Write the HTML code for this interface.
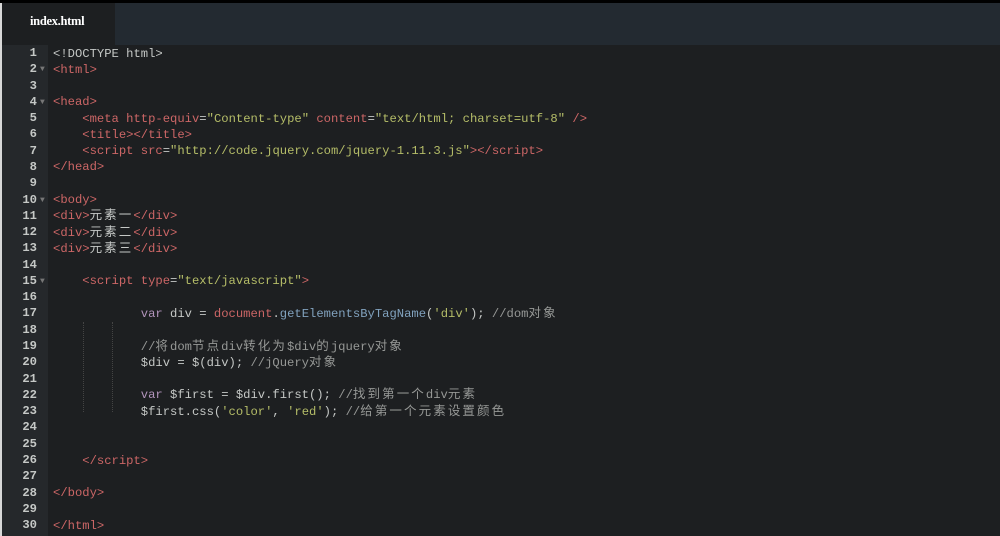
<!DOCTYPE html>
<html><head><meta charset="utf-8"><style>
body{margin:0;width:1000px;height:536px;overflow:hidden;background:#1d1f21;position:relative;font-family:"Liberation Mono","Noto Sans CJK SC",monospace}
.top{position:absolute;left:0;top:0;width:1000px;height:3px;background:#000}
.bar{position:absolute;left:0;top:3px;width:1000px;height:42px;background:#232a31}
.tab{position:absolute;left:2px;top:3px;width:113px;height:42px;background:#1d1f21;color:#fff;font:bold 12.5px "Liberation Serif",serif;letter-spacing:-0.3px;line-height:36px;padding-left:28px;box-sizing:border-box}
.edge{position:absolute;left:0;top:3px;width:2px;height:533px;background:#d8d8d8}
.gut{position:absolute;left:2px;top:45px;width:46px;height:491px;background:#25282b}
.ln{position:absolute;left:2px;width:35px;text-align:right;color:#c5c8c6;font-size:12.2px;font-weight:bold;line-height:16px;height:16px}
.fd{position:absolute;left:40px;color:#777;font-size:8px;line-height:10px}
.cl{position:absolute;left:53px;white-space:pre;font-size:12.2px;color:#c5c8c6;line-height:16px;height:16px}
.cj{font-size:12.5px;letter-spacing:2.1px;line-height:16px}
.t{color:#cc6666}.s{color:#b5bd68}.k{color:#b294bb}.c{color:#969896}
.g{position:absolute;width:0;border-left:1px dotted #444}
</style></head><body>
<div class="top"></div><div class="bar"></div><div class="tab">index.html</div><div class="edge"></div><div class="gut"></div>
<div class="g" style="left:83px;top:322px;height:90px"></div>
<div class="g" style="left:112px;top:322px;height:90px"></div>
<div id="c"></div>
<script>
var L=[
'<span>&lt;!DOCTYPE html&gt;</span>',
'<span class="t">&lt;html&gt;</span>','',
'<span class="t">&lt;head&gt;</span>',
'    <span class="t">&lt;meta http-equiv</span>=<span class="s">"Content-type"</span> <span class="t">content</span>=<span class="s">"text/html; charset=utf-8"</span> <span class="t">/&gt;</span>',
'    <span class="t">&lt;title&gt;&lt;/title&gt;</span>',
'    <span class="t">&lt;script src</span>=<span class="s">"http://code.jquery.com/jquery-1.11.3.js"</span><span class="t">&gt;&lt;/script&gt;</span>',
'<span class="t">&lt;/head&gt;</span>','',
'<span class="t">&lt;body&gt;</span>',
'<span class="t">&lt;div&gt;</span>元素一<span class="t">&lt;/div&gt;</span>',
'<span class="t">&lt;div&gt;</span>元素二<span class="t">&lt;/div&gt;</span>',
'<span class="t">&lt;div&gt;</span>元素三<span class="t">&lt;/div&gt;</span>','',
'    <span class="t">&lt;script type</span>=<span class="s">"text/javascript"</span><span class="t">&gt;</span>','',
'            <span class="k">var</span> div = <span class="t">document</span>.<span style="color:#81a2be">getElementsByTagName</span>(<span class="s">\'div\'</span>); <span class="c">//dom对象</span>','',
'            <span class="c">//将dom节点div转化为$div的jquery对象</span>',
'            $div = $(div); <span class="c">//jQuery对象</span>','',
'            <span class="k">var</span> $first = $div.first(); <span class="c">//找到第一个div元素</span>',
'            $first.css(<span class="s">\'color\'</span>, <span class="s">\'red\'</span>); <span class="c">//给第一个元素设置颜色</span>',
'','',
'    <span class="t">&lt;/script&gt;</span>','',
'<span class="t">&lt;/body&gt;</span>','',
'<span class="t">&lt;/html&gt;</span>'];
var f={2:1,4:1,10:1,15:1},h='';
for(var i=0;i<30;i++){var y=45+i*16.28;var s=L[i].replace(/([\u4e00-\u9fff]+)/g,'<span class="cj">$1</span>');
h+='<div class="ln" style="top:'+y+'px">'+(i+1)+'</div>';if(f[i+1])h+='<div class="fd" style="top:'+(y+4)+'px">▼</div>';h+='<div class="cl" style="top:'+(y+0.5)+'px">'+s+'</div>';}
document.getElementById('c').innerHTML=h;
</script>
</body></html>
